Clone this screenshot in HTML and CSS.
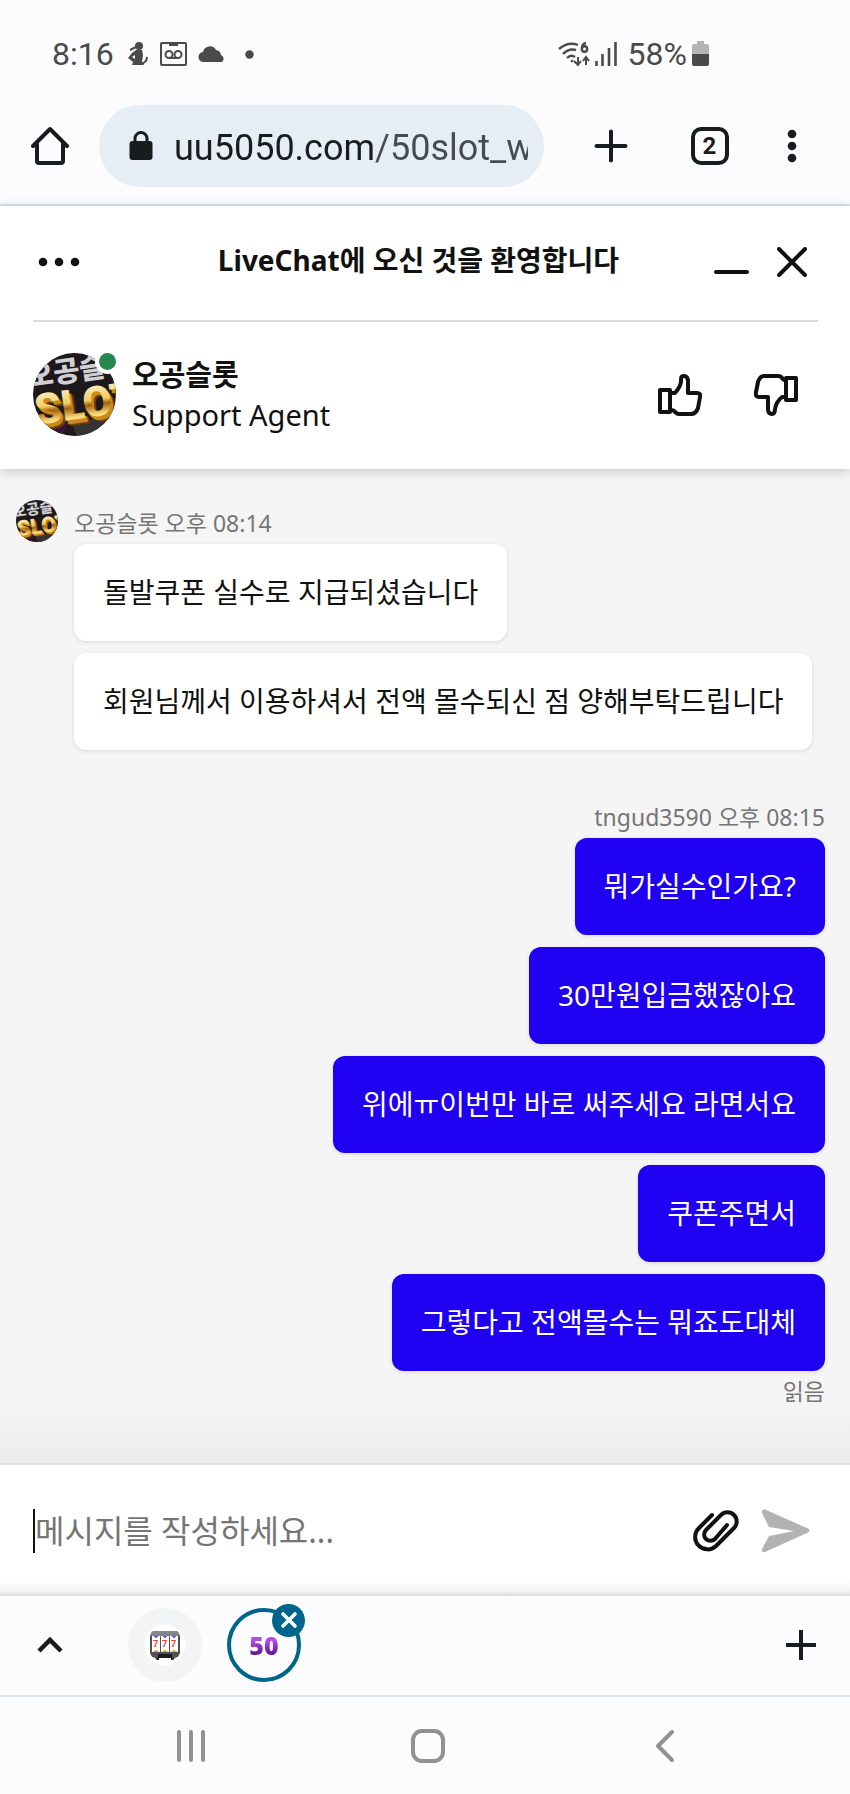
FILE: index.html
```html
<!DOCTYPE html>
<html lang="ko">
<head>
    <meta charset="UTF-8">
    <meta name="viewport" content="width=device-width, initial-scale=1.0">
    <title>LiveChat</title>
    <link rel="stylesheet" href="styles.css">
</head>
<body>
    <div class="status-bar">
        <span class="clock">8:16</span>
        <div class="status-icons">
            <svg width="22" height="26" viewBox="0 0 22 26">
                <circle cx="12" cy="5" r="4" fill="#4a4a4a"/>
                <path d="M9 9h6l1 5-1 7 2 3H5l1-3-5-4 4-5z" fill="#4a4a4a"/>
                <path d="M3 9l6-3M20 16q0 6-7 7" fill="none" stroke="#4a4a4a" stroke-width="2"/>
                <path d="M5 16l3-2v4z" fill="#fcfcfe"/>
            </svg>
            <svg width="27" height="24" viewBox="0 0 27 24" fill="none" stroke="#4a4a4a" stroke-width="2">
                <rect x="1" y="1" width="25" height="22" rx="1"/>
                <path d="M9 2.500h9" stroke-width="3"/>
                <circle cx="9" cy="12.500" r="3.500"/>
                <circle cx="18" cy="12.500" r="3.500"/>
                <path d="M9 16h9"/>
            </svg>
            <svg width="28" height="18" viewBox="0 0 28 18">
                <path d="M6 17a5 5 0 0 1-1-10 7 7 0 0 1 13-2 6 6 0 0 1 5 5 4 4 0 0 1 1 7z" fill="#4a4a4a"/>
            </svg>
            <svg class="more-dot" width="9" height="9" viewBox="0 0 9 9"><circle cx="4.500" cy="4.500" r="4.200" fill="#4a4a4a"/></svg>
        </div>
        <div class="status-right">
            <svg width="32" height="26" viewBox="0 0 32 26" fill="none" stroke="#4a4a4a" stroke-width="2.400">
                <path d="M1 8Q10 0 20 4M5 13q6-6 13-4M9 17q4-4 8-1"/>
                <circle cx="14" cy="20" r="1" fill="#4a4a4a" stroke-width="1"/>
                <path d="M28 2q-4 1-4 5"/><circle cx="26.500" cy="8" r="2.700"/>
                <path d="M20 16v8m-4-4 4 4 3-4M28 24v-8m-3 4 3-4 3 4" stroke-width="2"/>
            </svg>
            <svg width="22" height="26" viewBox="0 0 22 26" stroke="#4a4a4a" stroke-width="2.600">
                <path d="M1.500 20v5M7.500 13v12M14 7v18M20.500 1v24"/>
            </svg>
            <span class="battery-level">58%</span>
            <svg width="18" height="26" viewBox="0 0 18 26">
                <path d="M5 0h7v3h3q2 0 2 2v9H0V5q0-2 2-2h3z" fill="#b5b5b5"/>
                <path d="M0 13h17v10q0 2-2 2H2q-2 0-2-2z" fill="#4a4a4a"/>
            </svg>
        </div>
    </div>

    <nav class="toolbar">
        <button class="tool-button" aria-label="Home">
            <svg width="38" height="40" viewBox="0 0 38 40" fill="none" stroke="#191c1e" stroke-width="4" stroke-linecap="round" stroke-linejoin="round">
                <path d="M2 20 19 3l17 17"/><path d="M6 18v17q0 2 2 2h22q2 0 2-2V18"/>
            </svg>
        </button>
        <div class="address">
            <svg width="24" height="30" viewBox="0 0 24 30">
                <rect x="0.500" y="10" width="23" height="19" rx="3" fill="#191c1e"/>
                <path d="M6 12V7.500a6 6 0 0 1 12 0V12" fill="none" stroke="#191c1e" stroke-width="3"/>
            </svg>
            <input class="address-input" type="text" value="uu5050.com/50slot_w" aria-label="Address">
        </div>
        <button class="tool-button" aria-label="New tab">
            <svg width="34" height="34" viewBox="0 0 34 34" stroke="#191c1e" stroke-width="4" stroke-linecap="round"><path d="M17 2.500v29M2.500 17h29"/></svg>
        </button>
        <button class="tool-button" aria-label="Tabs"><span class="tab-count">2</span></button>
        <button class="tool-button narrow" aria-label="Menu">
            <svg width="10" height="34" viewBox="0 0 10 34" fill="#191c1e"><circle cx="5" cy="5" r="4.300"/><circle cx="5" cy="17" r="4.300"/><circle cx="5" cy="29" r="4.300"/></svg>
        </button>
    </nav>

    <header class="chat-header">
        <div class="title-row">
            <button aria-label="Options">
                <svg width="42" height="10" viewBox="0 0 42 10" fill="#111"><circle cx="5" cy="5" r="4.300"/><circle cx="21" cy="5" r="4.300"/><circle cx="37" cy="5" r="4.300"/></svg>
            </button>
            <h1>LiveChat에 오신 것을 환영합니다</h1>
            <div class="window-buttons">
                <button aria-label="Minimize">
                    <svg width="36" height="30" viewBox="0 0 36 30" stroke="#111" stroke-width="4" stroke-linecap="round"><path d="M3 25h31"/></svg>
                </button>
                <button aria-label="Close">
                    <svg width="30" height="30" viewBox="0 0 30 30" stroke="#111" stroke-width="4" stroke-linecap="round"><path d="M2 2l26 26M28 2 2 28"/></svg>
                </button>
            </div>
        </div>
        <div class="agent-row">
            <div class="agent-photo">
                <svg class="avatar" viewBox="0 0 84 84" role="img" aria-label="오공슬롯">
                    <defs>
                        <linearGradient id="gold" x1="0" y1="0" x2="0" y2="1">
                            <stop offset="0" stop-color="#fffbe0"/>
                            <stop offset="0.450" stop-color="#f4cd63"/>
                            <stop offset="0.550" stop-color="#a45d0c"/>
                            <stop offset="0.750" stop-color="#f9da7a"/>
                            <stop offset="1" stop-color="#fff0b0"/>
                        </linearGradient>
                        <clipPath id="round"><circle cx="42" cy="42" r="42"/></clipPath>
                        <g id="logo" clip-path="url(#round)">
                            <rect width="84" height="84" fill="#1d181b"/>
                            <path d="M10 65h28l-8 19H10z" fill="#3b1530"/>
                            <path d="M40 72l26-6 18 10v8H44z" fill="#343332"/>
                            <g transform="rotate(-8 42 42)">
                                <text class="logo-name" x="-3" y="28">오공슬</text>
                                <text class="logo-slot logo-edge" x="4" y="73">SLOT</text>
                                <text class="logo-slot logo-side" x="2" y="71">SLOT</text>
                                <text class="logo-slot" x="0" y="67" fill="url(#gold)">SLOT</text>
                            </g>
                        </g>
                    </defs>
                    <use href="#logo"/>
                </svg>
                <span class="online"></span>
            </div>
            <div class="agent-info">
                <strong>오공슬롯</strong>
                <span>Support Agent</span>
            </div>
            <button class="rate" aria-label="Good">
                <svg width="44" height="42" viewBox="0 0 44 42" fill="none" stroke="#111" stroke-width="4" stroke-linejoin="round">
                    <path d="M2 16h10v22H2z"/>
                    <path d="M12 19h5q7-8 6-14 0-3 3-3 4 0 4 6v11h9q4 0 3 4l-2 11q-2 6-7 6H21q-2 0-4-2-1-2-5-2"/>
                </svg>
            </button>
            <button class="rate" aria-label="Bad">
                <svg width="44" height="42" viewBox="0 0 44 42" fill="none" stroke="#111" stroke-width="4" stroke-linejoin="round">
                    <path d="M42 4H32v22h10z"/>
                    <path d="M32 23h-4q-6 5-7 12 0 5-3 5-4 0-4-5V23H5q-4 0-3-5L4 8q2-6 6-6h14q3 0 4 2 1 2 4 2"/>
                </svg>
            </button>
        </div>
    </header>

    <main class="messages">
        <section class="group">
            <svg class="avatar-small" viewBox="0 0 84 84" role="img" aria-label="오공슬롯"><use href="#logo"/></svg>
            <div class="thread">
                <p class="meta">오공슬롯 오후 08:14</p>
                <p class="bubble">돌발쿠폰 실수로 지급되셨습니다</p>
                <p class="bubble">회원님께서 이용하셔서 전액 몰수되신 점 양해부탁드립니다</p>
            </div>
        </section>
        <section class="group own">
            <div class="thread">
                <p class="meta">tngud3590 오후 08:15</p>
                <p class="bubble">뭐가실수인가요?</p>
                <p class="bubble">30만원입금했잖아요</p>
                <p class="bubble">위에ㅠ이번만 바로 써주세요 라면서요</p>
                <p class="bubble">쿠폰주면서</p>
                <p class="bubble">그렇다고 전액몰수는 뭐죠도대체</p>
                <p class="meta read">읽음</p>
            </div>
        </section>
    </main>

    <form class="composer">
        <span class="caret"></span>
        <input type="text" placeholder="메시지를 작성하세요..." aria-label="메시지">
        <button type="button" aria-label="Attach">
            <svg width="46" height="42" viewBox="0 0 46 42" fill="none" stroke="#111" stroke-width="4" stroke-linecap="round">
                <path d="M19 5 6 18a12 12 0 0 0 17 18l18-18a9 9 0 0 0-13-13L13 20a6 6 0 0 0 9 9L34 15" stroke-linejoin="round"/>
            </svg>
        </button>
        <button type="button" aria-label="Send">
            <svg width="50" height="46" viewBox="0 0 50 46"><path d="M4 1.500 47 20.500q3 2 0 4L4 44q-4 1-3-3L8 28l25-5L8 19 1 5q-1-4 3-3.500z" fill="#b2b2b2"/></svg>
        </button>
    </form>

    <div class="tab-strip">
        <button class="tool-button" aria-label="Show tabs">
            <svg width="26" height="18" viewBox="0 0 26 18" fill="none" stroke="#191c1e" stroke-width="4.500"><path d="M2 15 13 4l11 11"/></svg>
        </button>
        <button class="site" aria-label="Slots">
            <svg width="42" height="42" viewBox="0 0 42 42">
                <circle cx="21" cy="21" r="20.500" fill="#fff"/>
                <rect x="6" y="7" width="30" height="27" rx="6" fill="#4f5052"/>
                <rect x="7" y="7" width="28" height="6" rx="3" fill="#85878a"/>
                <path d="M8 12h8v16H8zM17 12h8v16h-8zM26 12h8v16h-8z" fill="#fff"/>
                <path d="M10 12h4l-2 2zM19 12h4l-2 2zM28 12h4l-2 2z" fill="#7c5cf2" stroke="#7c5cf2"/>
                <path d="M9 28q3-4 6 0zM18 28q3-4 6 0zM27 28q3-4 6 0z" fill="#f2a71b"/>
                <g class="reel"><text x="9" y="23">7</text><text x="18" y="23">7</text><text x="27" y="23">7</text></g>
                <rect x="14" y="30" width="14" height="4" fill="#1c1c1c"/>
                <path d="M11 34h4v2h-2zM27 34h4l-2 2h-2z" fill="#222"/>
            </svg>
        </button>
        <div class="site-current">
            <button class="site active">50</button>
            <button class="site-close" aria-label="Close tab">
                <svg width="18" height="18" viewBox="0 0 18 18" stroke="#fff" stroke-width="3.600" stroke-linecap="round"><path d="M3 3l12 12M15 3 3 15"/></svg>
            </button>
        </div>
        <button class="tool-button add" aria-label="Add">
            <svg width="30" height="30" viewBox="0 0 30 30" stroke="#191c1e" stroke-width="4"><path d="M15 0v30M0 15h30"/></svg>
        </button>
    </div>

    <nav class="system-nav">
        <button aria-label="Recents">
            <svg width="32" height="34" viewBox="0 0 32 34" stroke="#919193" stroke-width="4" stroke-linecap="round"><path d="M4 3v28M16 3v28M28 3v28"/></svg>
        </button>
        <button aria-label="Home">
            <svg width="34" height="34" viewBox="0 0 34 34" fill="none" stroke="#919193" stroke-width="4"><rect x="2" y="2" width="30" height="30" rx="9"/></svg>
        </button>
        <button aria-label="Back">
            <svg width="32" height="34" viewBox="0 0 32 34" fill="none" stroke="#919193" stroke-width="4" stroke-linecap="round" stroke-linejoin="round"><path d="M23 3 9 17l14 14"/></svg>
        </button>
    </nav>
</body>
</html>
```
FILE: styles.css
```css
* {
    margin: 0;
    padding: 0;
    box-sizing: border-box;
}

body {
    display: flex;
    flex-direction: column;
    min-height: 100vh;
    font-family: "Noto Sans", "Noto Sans CJK KR", sans-serif;
    font-size: 28px;
    line-height: 40px;
    color: #111;
    background-color: #fcfcfe;
}

button {
    display: flex;
    align-items: center;
    justify-content: center;
    border: none;
    background: none;
    font-family: inherit;
    cursor: pointer;
}

input {
    border: none;
    outline: none;
    background: none;
    min-width: 0;
}

svg {
    display: block;
    flex: none;
}

/* phone status bar */
.status-bar {
    display: flex;
    align-items: center;
    justify-content: space-between;
    height: 92px;
    padding: 16px 140px 0 52px;
    font-family: Roboto, sans-serif;
    font-size: 32px;
    color: #4a4a4a;
}

.status-icons {
    display: flex;
    align-items: center;
    gap: 11px;
    flex: 1;
    margin-left: 13px;
}

.more-dot {
    margin-left: 8px;
}

.status-right {
    display: flex;
    align-items: center;
    gap: 5px;
}

.battery-level {
    margin-left: 6px;
}

/* browser toolbar */
.toolbar {
    display: flex;
    align-items: center;
    height: 114px;
    padding: 0 25px 4px 0;
    border-bottom: 2px solid #dce4ea;
}

.tool-button {
    width: 99px;
    height: 82px;
}

.narrow {
    width: 66px;
}

.address {
    display: flex;
    align-items: center;
    flex: 1;
    min-width: 0;
    height: 82px;
    margin-right: 17px;
    padding: 0 16px 0 30px;
    gap: 21px;
    border-radius: 41px;
    background-color: #e6edf4;
}

.address-input {
    flex: 1;
    height: 60px;
    padding-top: 4px;
    font-family: Roboto, sans-serif;
    font-size: 36px;
    color: transparent;
    background: linear-gradient(90deg, #191c1e 200px, #454b51 200px);
    -webkit-background-clip: text;
    background-clip: text;
}

.tab-count {
    width: 38px;
    height: 38px;
    border: 4px solid #191c1e;
    border-radius: 10px;
    font-family: Roboto, sans-serif;
    font-size: 24px;
    font-weight: bold;
    line-height: 30px;
    color: #191c1e;
}

/* chat header */
.chat-header {
    position: relative;
    padding: 0 32px 0 33px;
    background-color: #fff;
    box-shadow: 0 2px 12px rgba(0, 0, 0, 0.2);
}

.title-row {
    display: grid;
    grid-template-columns: 106px 1fr 120px;
    align-items: center;
    height: 116px;
    padding-bottom: 2px;
    border-bottom: 2px solid #d9d9d9;
}

.title-row > button {
    justify-self: start;
    margin-left: 5px;
}

h1 {
    padding-bottom: 4px;
    font-size: 28px;
    font-weight: bold;
    text-align: center;
    white-space: nowrap;
}

.window-buttons {
    display: flex;
    justify-content: flex-end;
    gap: 28px;
    padding-right: 11px;
}

.agent-row {
    display: flex;
    align-items: center;
    height: 147px;
    padding: 0 20px 2px 0;
}

.agent-photo {
    position: relative;
}

.avatar {
    width: 83px;
    height: 83px;
}

.online {
    position: absolute;
    top: -4px;
    right: -4px;
    width: 25px;
    height: 25px;
    border: 4px solid #fff;
    border-radius: 50%;
    background-color: #268750;
}

.logo-name {
    font-family: "Noto Sans CJK KR", sans-serif;
    font-size: 29px;
    font-weight: 900;
    fill: #d0d0d4;
}

.logo-slot {
    font-family: Roboto, sans-serif;
    font-size: 43px;
    font-weight: 900;
}

.logo-edge {
    fill: #6b3c08;
}

.logo-side {
    fill: #c98a1c;
}

.agent-info {
    display: flex;
    flex-direction: column;
    flex: 1;
    margin-left: 16px;
    font-size: 29px;
}

.rate {
    margin-left: 52px;
}

/* conversation */
.messages {
    flex: 1;
    padding: 24px 25px 0 16px;
    background: linear-gradient(to top, #ececec, #f5f5f5 64px);
}

.group {
    display: flex;
    gap: 16px;
}

.avatar-small {
    width: 42px;
    height: 42px;
    margin-top: 7px;
}

.thread {
    display: flex;
    flex-direction: column;
    align-items: flex-start;
    gap: 12px;
}

.meta {
    margin: 10px 0 -11px;
    font-size: 23px;
    color: #757575;
}

.bubble {
    padding: 28px 29px;
    border-radius: 12px;
    background-color: #fff;
    line-height: 41px;
    box-shadow: 0 1px 4px rgba(0, 0, 0, 0.12);
}

.own {
    justify-content: flex-end;
    margin-top: 37px;
}

.own .thread {
    align-items: flex-end;
}

.own .bubble {
    background-color: #2000f0;
    color: #fff;
}

.read {
    margin: -12px 0 0;
}

/* message box */
.composer {
    display: flex;
    align-items: center;
    height: 133px;
    padding: 0 39px 0 33px;
    border-top: 2px solid #e0e0e0;
    background: linear-gradient(to top, #dcdcdc, #f4f4f4 5px, #fff 16px);
}

.caret {
    width: 2px;
    height: 44px;
    background-color: #111;
}

.composer input {
    flex: 1;
    height: 60px;
    font-family: inherit;
    font-size: 32px;
    color: #111;
}

.composer input::placeholder {
    color: #757575;
}

.composer button {
    margin-left: 22px;
}

/* tab group strip */
.tab-strip {
    display: flex;
    align-items: center;
    height: 101px;
    padding-bottom: 2px;
    border-bottom: 2px solid #dce4ea;
}

.site {
    width: 74px;
    height: 74px;
    margin-left: 29px;
    border-radius: 50%;
    background-color: #f2f4f6;
}

.reel {
    font-family: Roboto, sans-serif;
    font-size: 9px;
    font-weight: bold;
    fill: #e0442a;
}

.site-current {
    position: relative;
    margin-left: 25px;
}

.active {
    margin-left: 0;
    border: 4px solid #00658c;
    background: linear-gradient(#b44be8 28px, #4a0c78 46px) text;
    font-family: "Noto Sans", sans-serif;
    font-size: 25px;
    font-weight: 900;
    color: transparent;
}

.site-close {
    position: absolute;
    top: -4px;
    right: -4px;
    width: 33px;
    height: 33px;
    border-radius: 50%;
    background-color: #00658c;
}

.add {
    margin-left: auto;
}

/* phone navigation keys */
.system-nav {
    display: flex;
    align-items: center;
    justify-content: center;
    gap: 204px;
    height: 97px;
    padding-left: 6px;
}
```
